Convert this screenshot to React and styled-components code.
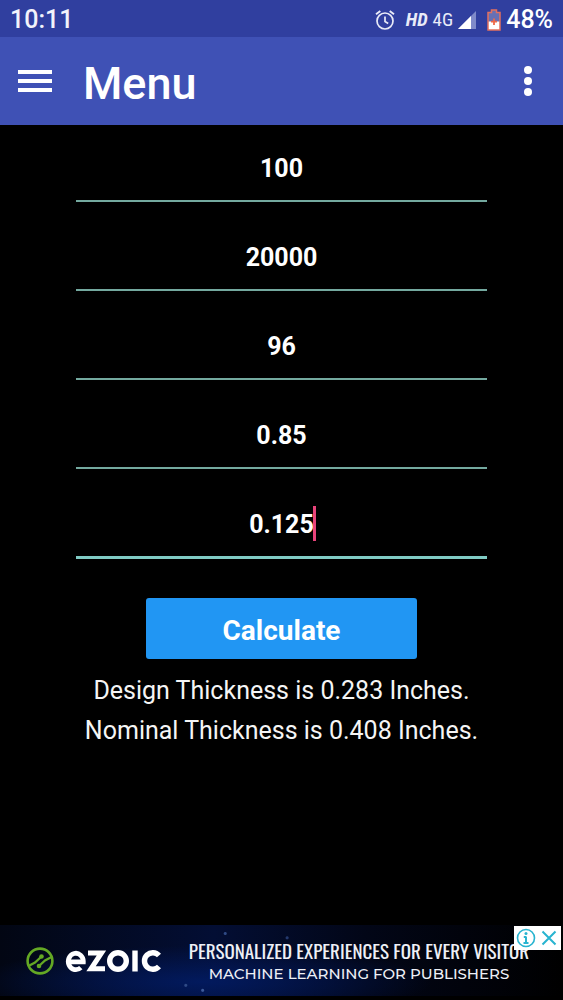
import React, { useState } from 'react';
import styled, { createGlobalStyle } from 'styled-components';

const initialFields = [
    { name: 'pressure', label: 'Pressure', value: '100' },
    { name: 'stress', label: 'Allowable stress', value: '20000' },
    { name: 'diameter', label: 'Diameter', value: '96' },
    { name: 'efficiency', label: 'Joint efficiency', value: '0.85' },
    { name: 'allowance', label: 'Corrosion allowance', value: '0.125' },
];

function AlarmIcon() {
    return (
        <svg width='20' height='20' viewBox='0 0 20 20' fill='none' stroke='#e9ebf8' strokeWidth='1.7'>
            <circle cx='10' cy='11' r='8' />
            <path d='M10 6.5v5l3.2 2' />
            <path d='M1 4.3 5.3 1M19 4.3 14.7 1' strokeWidth='1.9' />
        </svg>
    );
}

function SignalIcon() {
    return (
        <svg width='18' height='18' viewBox='0 0 18 18'>
            <path d='M0 18 18 0v18z' fill='#7f8ac9' />
            <path d='M0 18 13 5v13z' fill='#fff' />
        </svg>
    );
}

function BatteryIcon() {
    return (
        <svg width='14' height='22' viewBox='0 0 14 22'>
            <path d='M4.5 1h5v2.5H13V21H1V3.5h3.5z' fill='#6670b5' />
            <path d='M1 12.5h12V21H1z' fill='#fff' />
            <path d='M4.5 1h5v2.5H13V21H1V3.5h3.5z' fill='none' stroke='#e2705f' strokeWidth='1.5' />
            <path d='M7 9.5v6.500M4 12.700h6' stroke='#ee6a4a' strokeWidth='1.8' />
        </svg>
    );
}

function EzoicIcon() {
    return (
        <svg width='28' height='28' viewBox='0 0 28 28' fill='none' stroke='#64a824' strokeWidth='2.6'>
            <circle cx='14' cy='14' r='12.4' />
            <path d='M2.5 19 9 15.5 15.5 9.5M25.5 10 19 13.5 13 19' strokeWidth='2.3' />
            <circle cx='15.5' cy='9.5' r='2.3' fill='#64a824' stroke='none' />
            <circle cx='13' cy='19' r='2.3' fill='#64a824' stroke='none' />
        </svg>
    );
}

function EzoicWordmark() {
    return (
        <svg width='96' height='24' viewBox='0 0 96 24' fill='none' stroke='#fff' strokeWidth='5.4'>
            <path d='M4 12.8h14.3a7.5 8.2 0 1 0-2.5 5.8' strokeWidth='4.8' />
            <path d='M23 4h13.5L26 19.8H40' strokeWidth='5' />
            <circle cx='53' cy='12' r='8.3' />
            <path d='M70 1.5v21' />
            <path d='M94 6.5a8.3 8.3 0 1 0 0 11' />
        </svg>
    );
}

function App() {
    const [fields, setFields] = useState(initialFields);

    const handleChange = (name, value) => {
        setFields(fields.map((field) => (field.name === name ? { ...field, value } : field)));
    };

    return (
        <Page>
            <GlobalStyle />
            <StatusBar>
                <Clock>10:11</Clock>
                <StatusIcons>
                    <AlarmIcon />
                    <Network>
                        <HdLabel>HD</HdLabel>
                        <span>4G</span>
                        <SignalIcon />
                    </Network>
                    <Battery>
                        <BatteryIcon />
                        <span>48%</span>
                    </Battery>
                </StatusIcons>
            </StatusBar>
            <AppBar>
                <MenuButton aria-label='Open menu'>
                    <span />
                    <span />
                    <span />
                </MenuButton>
                <Title>Menu</Title>
                <MoreButton aria-label='More options'>
                    <span />
                    <span />
                    <span />
                </MoreButton>
            </AppBar>
            <Form onSubmit={(e) => e.preventDefault()}>
                {fields.map((field) => (
                    <Field key={field.name} $active={field.name === 'allowance'}>
                        <input
                            aria-label={field.label}
                            inputMode='decimal'
                            value={field.value}
                            onChange={(e) => handleChange(field.name, e.target.value)}
                        />
                        {field.name === 'allowance' && <Caret />}
                    </Field>
                ))}
                <CalculateButton type='submit'>Calculate</CalculateButton>
                <Results>
                    <p>Design Thickness is 0.283 Inches.</p>
                    <p>Nominal Thickness is 0.408 Inches.</p>
                </Results>
            </Form>
            <Ad>
                <AdLogo href='#ezoic' aria-label='ezoic'>
                    <EzoicIcon />
                    <EzoicWordmark />
                </AdLogo>
                <AdText>
                    <AdHeadline>PERSONALIZED EXPERIENCES FOR EVERY VISITOR</AdHeadline>
                    <AdTagline>MACHINE LEARNING FOR PUBLISHERS</AdTagline>
                </AdText>
                <AdBadge>
                    <button aria-label='Ad information'>
                        <svg width='20' height='20' viewBox='0 0 20 20' fill='none' stroke='#28b4d0'>
                            <circle cx='10' cy='10' r='8.5' strokeWidth='1.6' />
                            <path d='M10 8.5V15M7.8 9H10M7.5 15h5' strokeWidth='2' />
                            <circle cx='10' cy='5.5' r='1.5' fill='#28b4d0' stroke='none' />
                        </svg>
                    </button>
                    <button aria-label='Close ad'>
                        <svg width='16' height='16' viewBox='0 0 16 16' stroke='#28b4d0' strokeWidth='2'>
                            <path d='M1.5 1.5l13 13M14.5 1.5l-13 13' />
                        </svg>
                    </button>
                </AdBadge>
            </Ad>
        </Page>
    );
}

export default App;

const GlobalStyle = createGlobalStyle`
    * {
        box-sizing: border-box;
    }

    body {
        margin: 0;
        background: #000;
    }

    button, input {
        font-family: inherit;
        border: none;
        padding: 0;
        background: none;
    }

    svg {
        display: block;
        flex-shrink: 0;
    }
`;

const Page = styled.div`
    min-height: 100vh;
    display: flex;
    flex-direction: column;
    background: #000;
    color: #fff;
    font-family: Roboto, 'Liberation Sans', sans-serif;
`;

const StatusBar = styled.div`
    display: flex;
    align-items: center;
    justify-content: space-between;
    height: 37px;
    padding: 2px 10px 0;
    background: #303f9f;
`;

const Clock = styled.span`
    font-size: 25px;
    font-weight: 500;
    color: #f2f3fb;
`;

const StatusIcons = styled.div`
    display: flex;
    align-items: center;
    gap: 11px;
`;

const Network = styled.div`
    display: flex;
    align-items: center;
    gap: 5px;
    font-family: 'Roboto Condensed', Roboto, sans-serif;
    font-size: 19px;
    color: #e9ebf8;
`;

const HdLabel = styled.span`
    font-style: italic;
    font-weight: 700;
`;

const Battery = styled.div`
    display: flex;
    align-items: center;
    gap: 5px;
    font-size: 25px;
    font-weight: 500;
`;

const AppBar = styled.header`
    display: flex;
    align-items: center;
    height: 88px;
    padding: 0 18px;
    background: #3f51b5;
`;

const MenuButton = styled.button`
    display: flex;
    flex-direction: column;
    gap: 5px;
    width: 34px;
    cursor: pointer;

    span {
        height: 4px;
        background: #fff;
    }
`;

const Title = styled.h1`
    flex: 1;
    margin: 0;
    padding: 4px 0 0 31px;
    font-size: 45px;
    font-weight: 500;
`;

const MoreButton = styled.button`
    display: flex;
    flex-direction: column;
    align-items: center;
    gap: 3px;
    width: 34px;
    cursor: pointer;

    span {
        width: 8px;
        height: 8px;
        border-radius: 50%;
        background: #fff;
    }
`;

const Form = styled.form`
    flex: 1;
    display: flex;
    flex-direction: column;
    align-items: center;
    padding-top: 6px;
`;

const Field = styled.div`
    position: relative;
    width: 73%;
    height: 89px;
    padding-top: 19px;

    input {
        display: block;
        width: 100%;
        height: ${(props) => (props.$active ? '53px' : '52px')};
        padding-bottom: 13px;
        border-bottom: ${(props) => (props.$active ? '3px' : '2px')} solid ${(props) => (props.$active ? '#80cbc4' : '#74a99f')};
        outline: none;
        color: #fff;
        caret-color: transparent;
        font-size: 25px;
        font-weight: 700;
        text-align: center;
    }
`;

const Caret = styled.span`
    position: absolute;
    top: 19px;
    left: calc(50% + 32px);
    width: 3px;
    height: 35px;
    background: #e8437a;
`;

const CalculateButton = styled.button`
    width: 48%;
    height: 61px;
    margin-top: 22px;
    padding-top: 4px;
    border-radius: 3px;
    background: #2196f3;
    color: #fff;
    font-size: 28px;
    font-weight: 700;
    cursor: pointer;
`;

const Results = styled.div`
    padding-top: 12px;
    font-size: 25px;
    line-height: 40px;
    color: #f5f5f5;
    text-align: center;

    p {
        margin: 0;
    }
`;

const Ad = styled.aside`
    position: relative;
    display: flex;
    align-items: center;
    height: 71px;
    margin-bottom: 4px;
    padding: 0 26px;
    background:
        radial-gradient(circle at 36% 92%, #3d5a9a 1px, transparent 2px),
        radial-gradient(circle at 33% 85%, #2f4a86 1px, transparent 2px),
        radial-gradient(circle at 40% 12%, #2f4a86 1px, transparent 2px),
        radial-gradient(circle at 51% 18%, #24396e 1px, transparent 2px),
        radial-gradient(ellipse at 36% 80%, rgb(2 27 98 / 0.9), transparent 45%),
        linear-gradient(90deg, #020613, #030e34 38%, #020617 65%, #000);
`;

const AdLogo = styled.a`
    display: flex;
    align-items: center;
    gap: 11px;
`;

const AdText = styled.div`
    flex: 1;
    display: flex;
    flex-direction: column;
    align-items: center;
    padding: 2px 0 0 20px;
    color: #eef0f6;
    white-space: nowrap;
`;

const AdHeadline = styled.span`
    font-family: Oswald, 'Roboto Condensed', 'Liberation Sans Narrow', Roboto, sans-serif;
    font-size: 19px;
    line-height: 24px;
`;

const AdTagline = styled.span`
    font-family: Montserrat, Inter, sans-serif;
    font-size: 15px;
    font-weight: 500;
    line-height: 24px;
`;

const AdBadge = styled.div`
    position: absolute;
    top: 1px;
    right: 2px;
    display: flex;
    align-items: center;
    gap: 5px;
    height: 24px;
    padding: 0 4px 0 2px;
    background: #fff;

    button {
        cursor: pointer;
    }
`;
